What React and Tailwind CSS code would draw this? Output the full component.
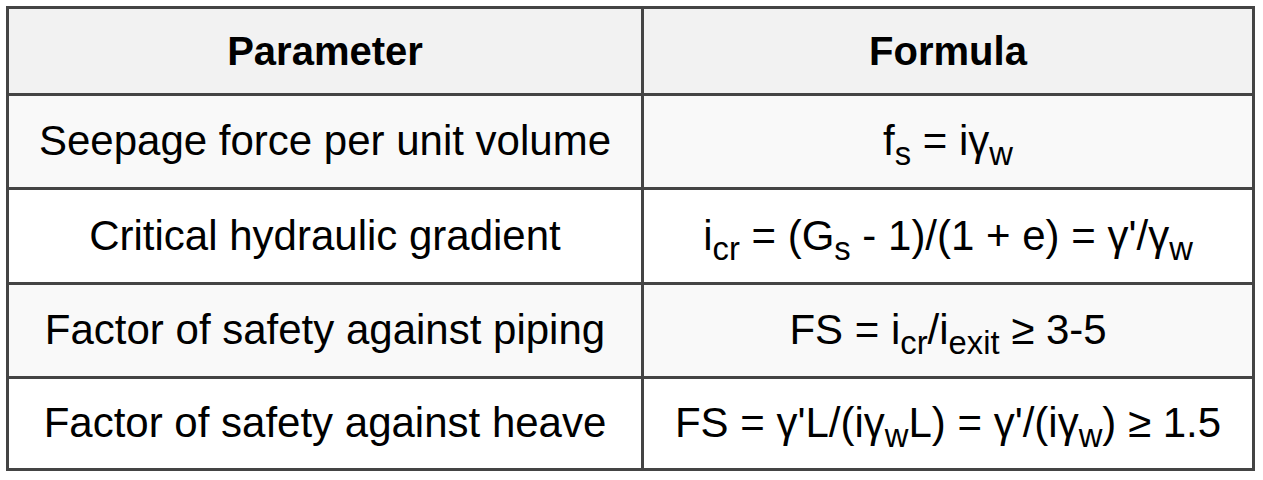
import React from "react";

const Sub = ({ children }) => (
  <sub className="text-[0.78em] leading-none relative bottom-[-0.32em] align-baseline">
    {children}
  </sub>
);

const rows = [
  {
    param: "Seepage force per unit volume",
    formula: (
      <>
        f<Sub>s</Sub> = iγ<Sub>w</Sub>
      </>
    ),
    bg: "bg-[#f9f9f9]",
    h: "h-[94px]",
  },
  {
    param: "Critical hydraulic gradient",
    formula: (
      <>
        i<Sub>cr</Sub> = (G<Sub>s</Sub> - 1)/(1 + e) = γ'/γ<Sub>w</Sub>
      </>
    ),
    bg: "bg-white",
    h: "h-[95px]",
  },
  {
    param: "Factor of safety against piping",
    formula: (
      <>
        FS = i<Sub>cr</Sub>/i<Sub>exit</Sub> ≥ 3-5
      </>
    ),
    bg: "bg-[#f9f9f9]",
    h: "h-[94px]",
  },
  {
    param: "Factor of safety against heave",
    formula: (
      <>
        FS = γ'L/(iγ<Sub>w</Sub>L) = γ'/(iγ<Sub>w</Sub>) ≥ 1.5
      </>
    ),
    bg: "bg-white",
    h: "h-[89px]",
  },
];

export default function App() {
  return (
    <div className="w-[1263px] h-[480px] bg-white pt-[6px] pl-[6px] font-['Liberation_Sans',Arial,sans-serif] text-black">
      <div className="w-[1249px] border-[3px] border-[#444]">
        {/* Header */}
        <div className="grid grid-cols-[635px_608px] h-[87px] bg-[#f2f2f2] border-b-[3px] border-[#444] text-[40px] font-bold">
          <div className="flex items-center justify-center border-r-[3px] border-[#444]">
            Parameter
          </div>
          <div className="flex items-center justify-center">Formula</div>
        </div>

        {rows.map((r, i) => (
          <div
            key={i}
            className={`grid grid-cols-[635px_608px] text-[42px] ${r.bg} ${r.h} ${
              i < rows.length - 1 ? "border-b-[3px] border-[#444]" : ""
            }`}
          >
            <div className="flex items-center justify-center border-r-[3px] border-[#444] pb-[2px]">
              {r.param}
            </div>
            <div className="flex items-center justify-center pb-[2px] whitespace-nowrap">
              <span>{r.formula}</span>
            </div>
          </div>
        ))}
      </div>
    </div>
  );
}
